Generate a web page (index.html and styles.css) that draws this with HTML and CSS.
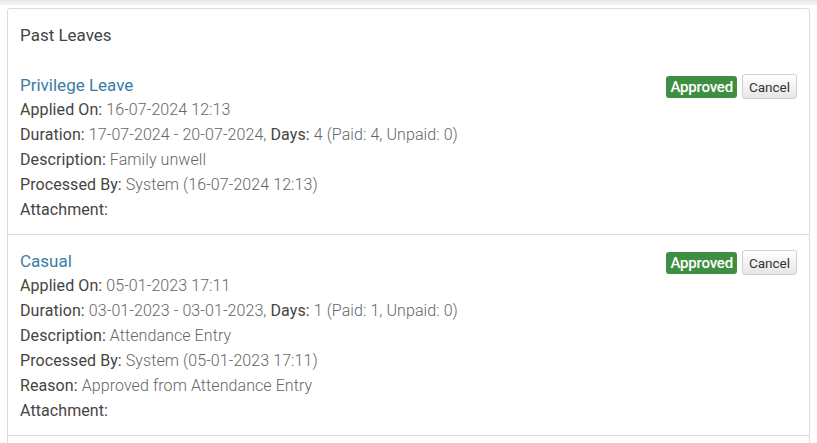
FILE: index.html
```html
<!DOCTYPE html>
<html>
<head>
<meta charset="utf-8">
<link rel="stylesheet" href="styles.css">
</head>
<body>
<div class="topbar"></div>
<div class="panel">
  <div class="panel-head">Past Leaves</div>
  <div class="item">
    <div class="item-head">
      <a class="title">Privilege Leave</a>
      <div class="actions"><span class="badge">Approved</span><button class="btn">Cancel</button></div>
    </div>
    <div class="row"><b>Applied On:</b> 16-07-2024 12:13</div>
    <div class="row"><b>Duration:</b> 17-07-2024 - 20-07-2024, <b>Days:</b> 4 (Paid: 4, Unpaid: 0)</div>
    <div class="row"><b>Description:</b> Family unwell</div>
    <div class="row"><b>Processed By:</b> System (16-07-2024 12:13)</div>
    <div class="row"><b>Attachment:</b></div>
  </div>
  <div class="item">
    <div class="item-head">
      <a class="title">Casual</a>
      <div class="actions"><span class="badge">Approved</span><button class="btn">Cancel</button></div>
    </div>
    <div class="row"><b>Applied On:</b> 05-01-2023 17:11</div>
    <div class="row"><b>Duration:</b> 03-01-2023 - 03-01-2023, <b>Days:</b> 1 (Paid: 1, Unpaid: 0)</div>
    <div class="row"><b>Description:</b> Attendance Entry</div>
    <div class="row"><b>Processed By:</b> System (05-01-2023 17:11)</div>
    <div class="row"><b>Reason:</b> Approved from Attendance Entry</div>
    <div class="row"><b>Attachment:</b></div>
  </div>
  <div class="item"></div>
</div>
</body>
</html>
```

FILE: styles.css
```css
html, body {
  margin: 0;
  padding: 0;
  background: #fff;
  font-family: Roboto, "Liberation Sans", sans-serif;
  overflow: hidden;
}
.topbar {
  height: 5px;
  background: linear-gradient(#e6e6e6, #f6f6f6);
}
.panel {
  margin: 3px 0 0 7px;
  width: 801px;
  border: 1px solid #dcdcdc;
  border-radius: 3px;
  background: #fff;
}
.panel-head {
  padding: 14px 12px 12px;
  line-height: 24px;
  font-size: 17px;
  color: #444;
}
.item {
  padding: 14px 12px 12px;
  border-bottom: 1px solid #dcdcdc;
}
.item-head {
  display: flex;
  justify-content: space-between;
  align-items: center;
  height: 24px;
}
.title {
  font-size: 17px;
  color: #3a7ca5;
  line-height: 24px;
}
.actions {
  display: flex;
  align-items: center;
  gap: 5px;
  margin-top: 3px;
}
.badge {
  background: #3f8f42;
  color: #fff;
  font-size: 15px;
  font-weight: 500;
  letter-spacing: -0.2px;
  line-height: 22px;
  height: 22px;
  padding: 0 4px;
  border-radius: 3px;
}
.btn {
  font-family: Roboto, "Liberation Sans", sans-serif;
  font-size: 13.5px;
  color: #333;
  height: 25px;
  padding: 0 6px;
  border: 1px solid #cfcfcf;
  border-radius: 3px;
  background: linear-gradient(#ffffff, #e6e6e6);
}
.row {
  font-size: 16px;
  line-height: 25px;
  color: #666;
  font-weight: 300;
  letter-spacing: 0.08px;
}
.row b {
  font-weight: 400;
  color: #444;
}
```
